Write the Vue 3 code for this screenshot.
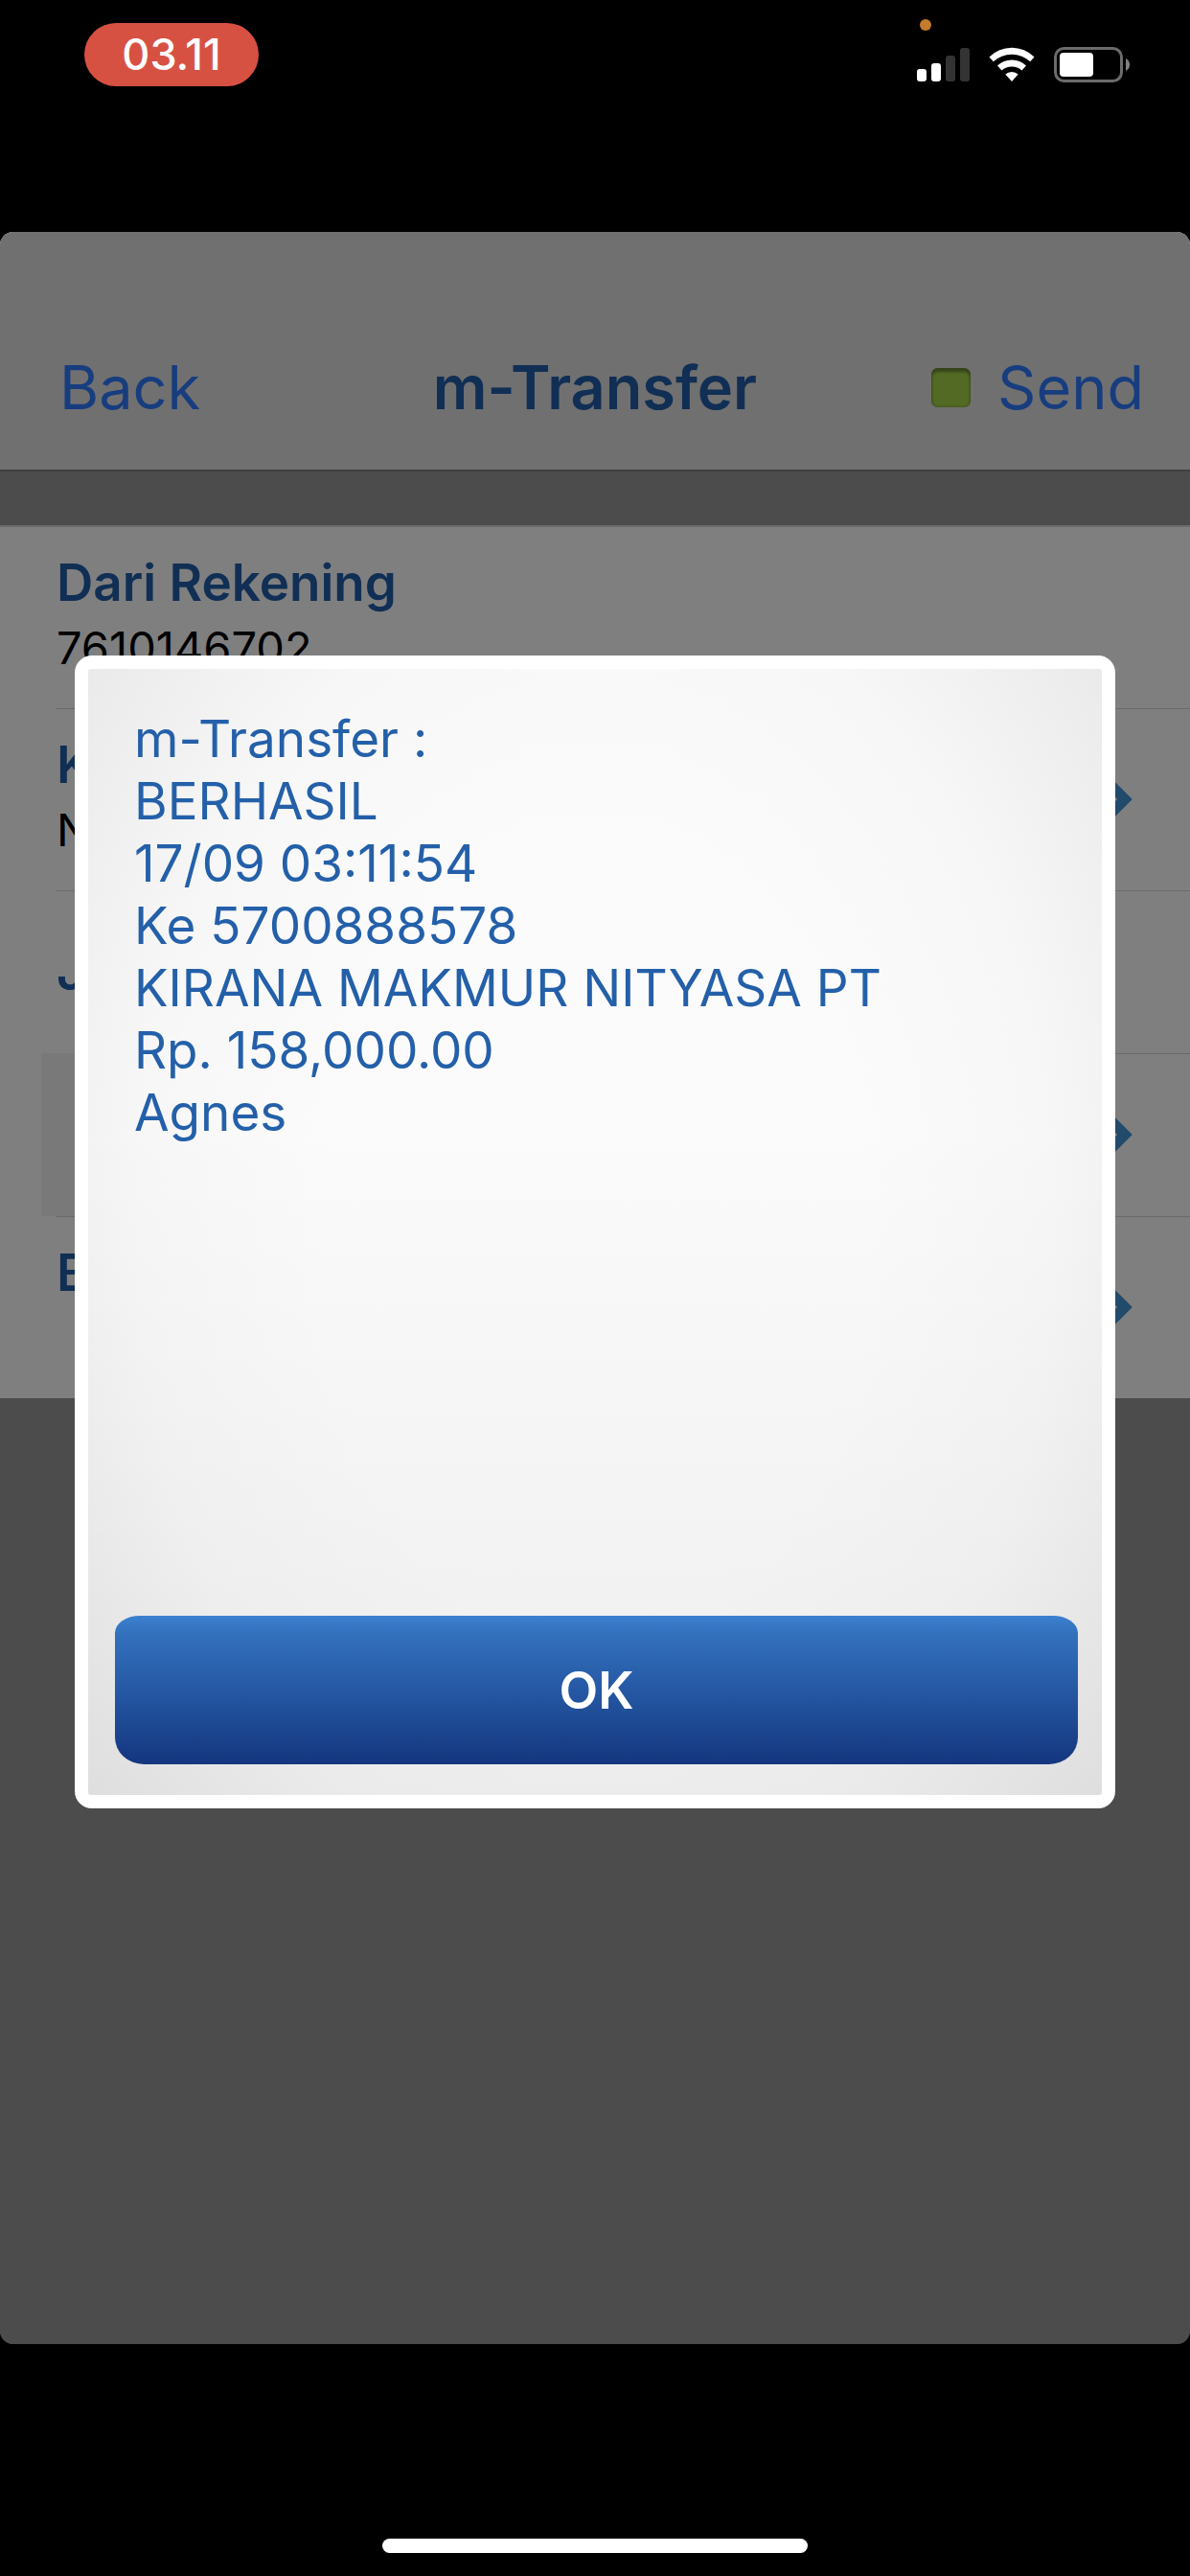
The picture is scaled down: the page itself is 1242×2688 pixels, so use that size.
<script setup>
import { ref } from 'vue'

const rows = [
  { label: 'Dari Rekening', value: '7610146702', arrow: false, type: 'tall' },
  { label: 'K', value: 'N', arrow: true, type: 'tall' },
  { label: 'J', value: '', arrow: false, type: 'short' },
  { label: '', value: '', arrow: true, type: 'short field' },
  { label: 'B', value: '', arrow: true, type: 'tall' },
]

const message = [
  'm-Transfer :',
  'BERHASIL',
  '17/09 03:11:54',
  'Ke 5700888578',
  'KIRANA MAKMUR NITYASA PT',
  'Rp. 158,000.00',
  'Agnes',
]

const showDialog = ref(true)
</script>

<template>
  <div class="phone">
    <div class="statusbar">
      <span class="clock">03.11</span>
      <div class="indicators">
        <span class="mic-dot"></span>
        <svg class="signal" width="55" height="37" viewBox="0 0 55 37">
          <rect x="0" y="23" width="10" height="13" rx="3" fill="#fff" />
          <rect x="15" y="17" width="10" height="19" rx="3" fill="#fff" />
          <rect x="30" y="9" width="10" height="27" rx="3" fill="#333" />
          <rect x="45" y="1" width="10" height="35" rx="3" fill="#333" />
        </svg>
        <svg class="wifi" width="48" height="37" viewBox="0 0 48 37">
          <path d="M.5 10.500A33.500 33.500 0 0 1 47.500 10.500L43.200 15.300A28 28 0 0 0 4.800 15.300Z" fill="#fff" />
          <path d="M9 19.500A21.500 21.500 0 0 1 39 19.500L34.500 24.500A15.500 15.500 0 0 0 13.500 24.500Z" fill="#fff" />
          <path d="M17.300 28.500A10 10 0 0 1 30.700 28.500L24 36Z" fill="#fff" />
        </svg>
        <svg class="battery" width="80" height="37" viewBox="0 0 80 37">
          <rect x="1.500" y="1.500" width="69" height="34" rx="9" fill="none" stroke="#6b6b6b" stroke-width="3" />
          <rect x="6" y="6" width="35" height="25" rx="4" fill="#fff" />
          <path d="M75 12Q79 14 79 18.500T75 25Z" fill="#808080" />
        </svg>
      </div>
    </div>

    <div class="app">
      <header class="navbar">
        <div class="left">
          <button class="nav-btn">Back</button>
        </div>
        <h1>m-Transfer</h1>
        <div class="right">
          <span class="online"></span>
          <button class="nav-btn">Send</button>
        </div>
      </header>

      <ul class="form">
        <li v-for="(row, i) in rows" :key="i" :class="row.type">
          <div class="cell">
            <span class="label">{{ row.label }}</span>
            <span v-if="row.value" class="value">{{ row.value }}</span>
          </div>
          <svg v-if="row.arrow" class="arrow" width="36" height="60" viewBox="0 0 36 60">
            <path d="M2 4L28 30L2 56" fill="none" stroke="#4494d6" stroke-width="11" />
          </svg>
        </li>
      </ul>

      <div v-if="showDialog" class="backdrop">
        <div class="dialog" role="dialog">
          <div class="message">
            <p v-for="line in message" :key="line">{{ line }}</p>
          </div>
          <button class="ok" @click="showDialog = false">OK</button>
        </div>
      </div>
    </div>

    <div class="home">
      <span class="home-bar"></span>
    </div>
  </div>
</template>

<style>
body {
  margin: 0;
  background: #000;
}
</style>

<style scoped>
.phone {
  display: flex;
  flex-direction: column;
  min-height: 100vh;
  background: #000;
  font-family: Inter, "Liberation Sans", sans-serif;
}
h1, p, ul {
  margin: 0;
  padding: 0;
}
button {
  border: 0;
  padding: 0;
  background: none;
  font-family: inherit;
}

/* status bar */
.statusbar {
  display: flex;
  justify-content: space-between;
  align-items: flex-start;
  height: 218px;
  padding: 24px 62px 0 88px;
}
.clock {
  width: 182px;
  border-radius: 33px;
  background: #d75143;
  color: #fff;
  font-size: 45px;
  font-weight: 500;
  line-height: 66px;
  text-align: center;
}
.indicators {
  position: relative;
  display: flex;
  gap: 20px;
  padding-top: 25px;
}
.mic-dot {
  position: absolute;
  top: -4px;
  left: 3px;
  width: 12px;
  height: 12px;
  border-radius: 50%;
  background: #c27c2b;
}

/* app window */
.app {
  position: relative;
  flex: 1;
  border-radius: 14px;
  overflow: hidden;
  background: #999;
}
.navbar {
  display: grid;
  grid-template-columns: 1fr auto 1fr;
  align-items: center;
  height: 172px;
  padding: 76px 48px 0;
  border-bottom: 2px solid #7c7c7c;
  background: #e1e1e1;
}
.nav-btn {
  color: #2e7aff;
  font-size: 63px;
  line-height: 80px;
}
.navbar h1 {
  color: #225eaa;
  font-size: 63px;
  font-weight: 600;
  line-height: 80px;
}
.left {
  padding-left: 14px;
}
.right {
  display: flex;
  align-items: center;
  justify-content: flex-end;
  gap: 28px;
}
.online {
  width: 41px;
  height: 41px;
  border-radius: 7px;
  background: #a4d448;
  box-shadow: inset 0 4px 3px #6c8735, inset 0 0 3px #6c8735;
}

.form {
  margin-top: 56px;
  padding-top: 1px;
  background: linear-gradient(#d6d6d6, #d6d6d6) 0 0 / 100% 2px no-repeat #fff;
  list-style: none;
}
.form li {
  display: flex;
  align-items: center;
  padding-right: 60px;
}
.cell {
  flex: 1;
  display: flex;
  flex-direction: column;
  padding-left: 59px;
}
.tall {
  height: 190px;
}
.short {
  height: 170px;
}
.tall .cell {
  align-self: stretch;
  padding-top: 27px;
}
.form li + li {
  background: linear-gradient(#d6d6d6, #d6d6d6) 58px 0 / 100% 1px no-repeat;
}
.form li.field .cell {
  align-self: stretch;
  margin-left: 43px;
  background: #f2f2f2;
}
.label {
  color: #225eaa;
  font-size: 53px;
  font-weight: 600;
  line-height: 65px;
}
.value {
  color: #000;
  font-size: 47px;
  line-height: 70px;
}

/* message dialog */
.backdrop {
  position: absolute;
  inset: 0;
  padding: 442px 78px 0;
  background: rgba(0, 0, 0, 0.5);
}
.dialog {
  display: flex;
  flex-direction: column;
  justify-content: space-between;
  box-sizing: border-box;
  min-height: 1203px;
  padding: 41px 25px 32px 28px;
  border: 14px solid #fff;
  border-radius: 18px;
  background:
    linear-gradient(transparent 40%, rgba(0, 0, 0, 0.05)),
    radial-gradient(ellipse 66% 86% at 50% 50%, #fbfbfb 40%, #f7f7f7 68%, #e8e8e8);
  background-clip: padding-box;
  background-color: #fff;
}
.message {
  padding: 0 20px;
  color: #2460a9;
  font-size: 53px;
  line-height: 65px;
}
.ok {
  height: 155px;
  border-radius: 26px 26px 30px 30px / 18px 18px 28px 28px;
  background: linear-gradient(#3c80d0, #3371bd 12%, #2558a4 50%, #14367e);
  color: #fff;
  font-size: 53px;
  font-weight: 600;
}

.home {
  display: flex;
  justify-content: center;
  align-items: flex-end;
  height: 218px;
  padding-bottom: 24px;
}
.home-bar {
  width: 444px;
  height: 15px;
  border-radius: 8px;
  background: #fff;
}
</style>
